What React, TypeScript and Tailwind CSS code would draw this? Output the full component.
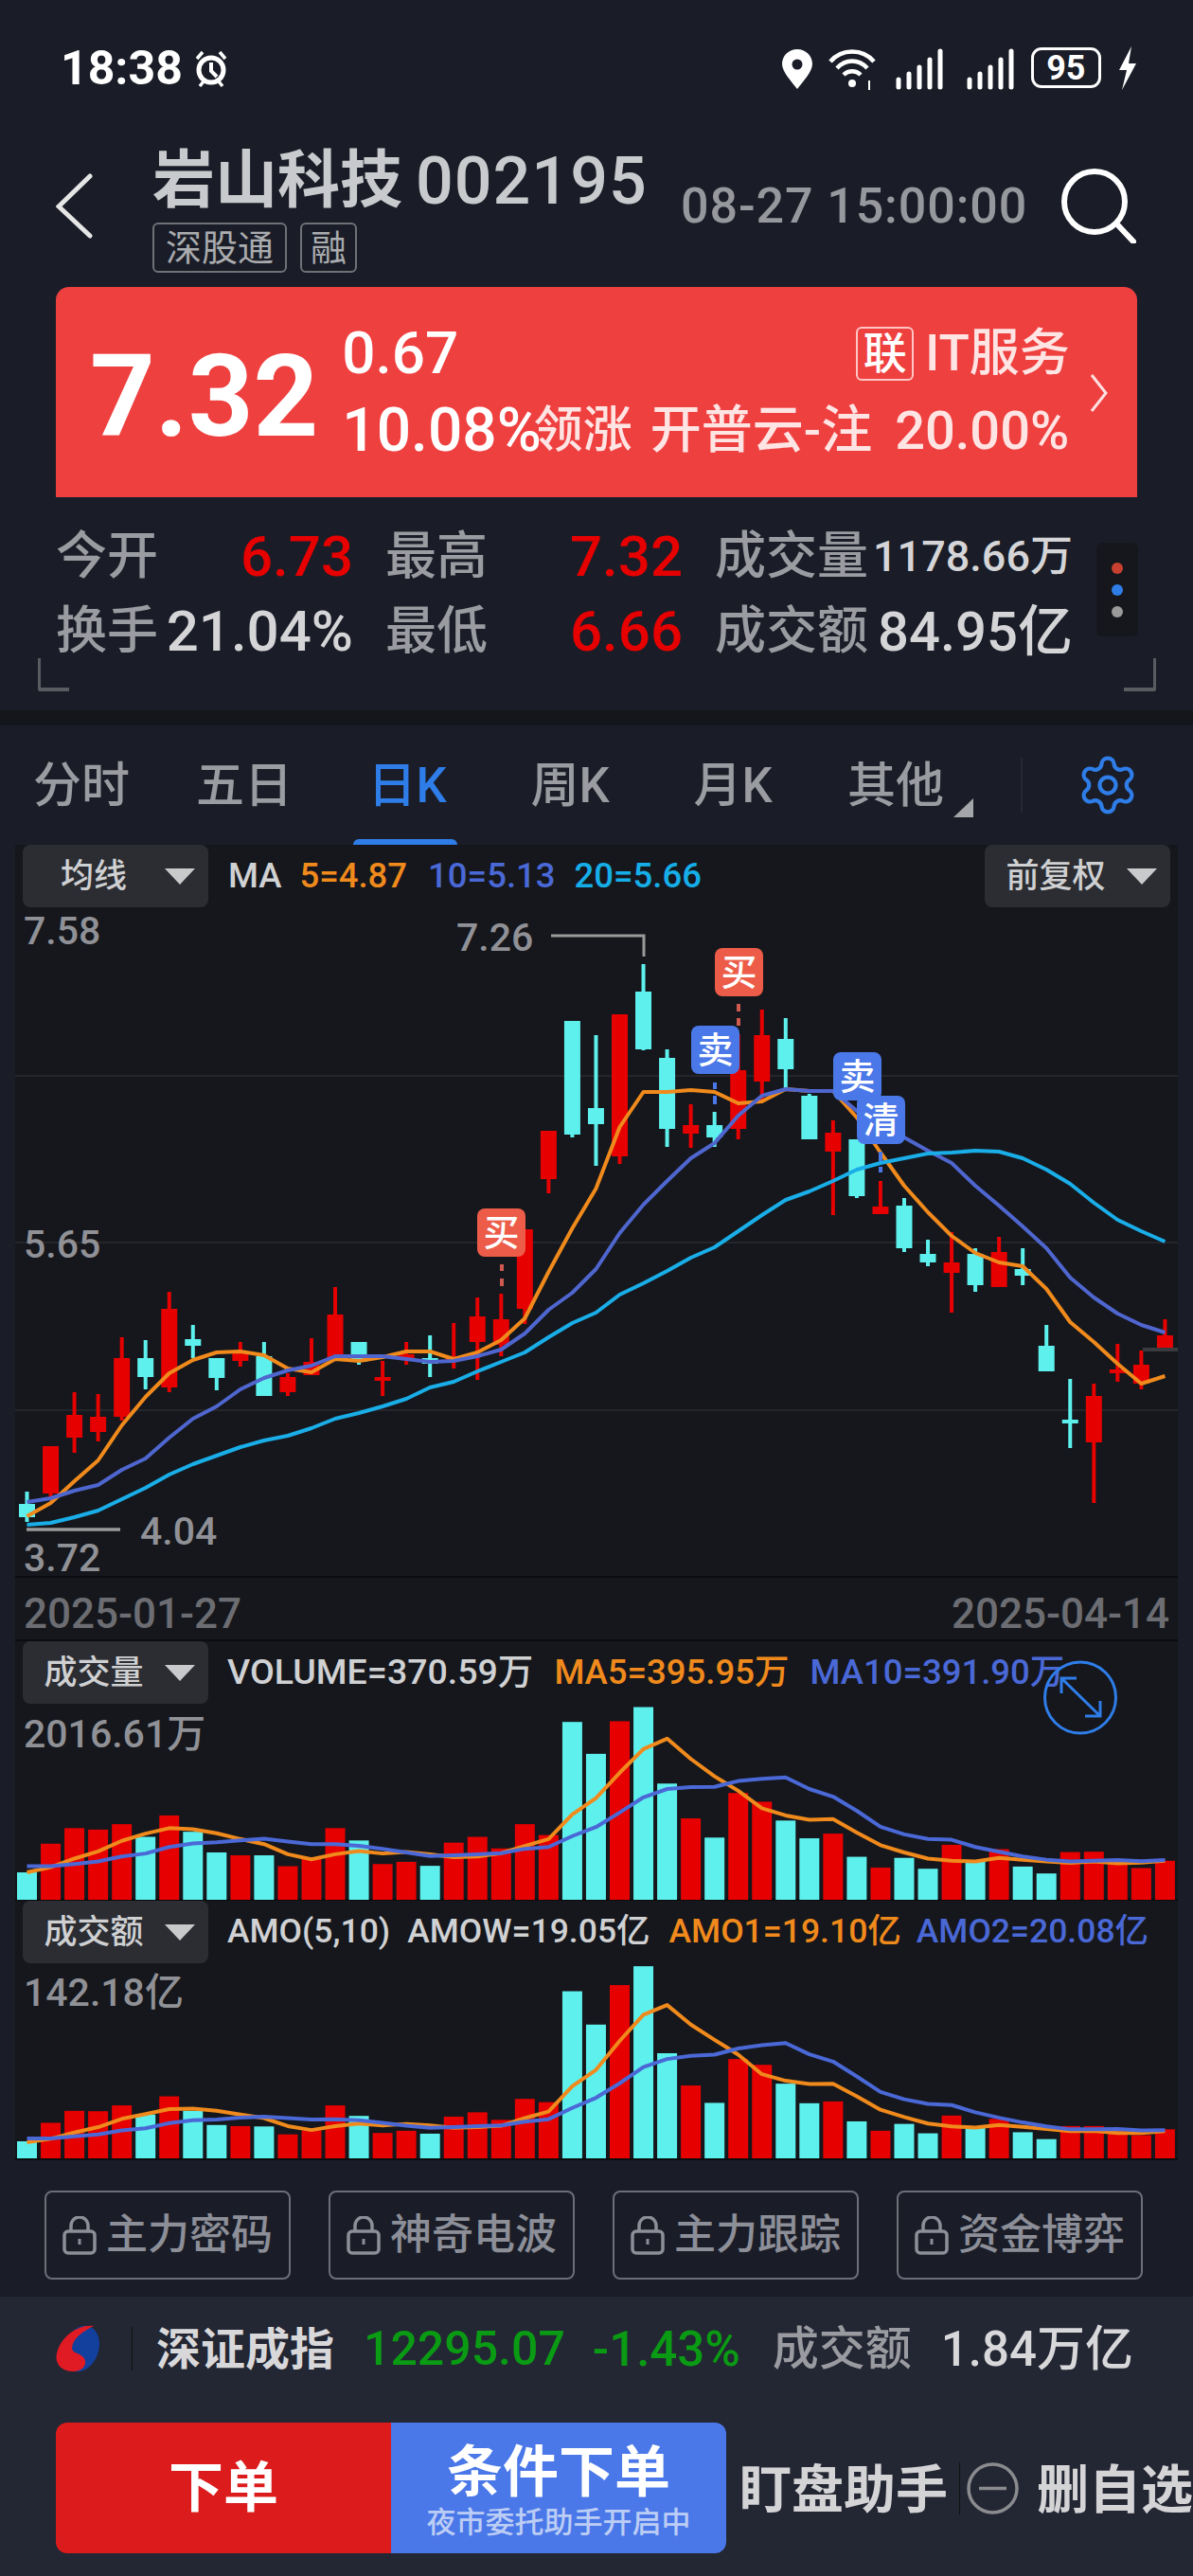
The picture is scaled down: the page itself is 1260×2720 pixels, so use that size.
import { Settings } from 'lucide-react';

// [wick top, body top, body bottom, wick bottom, colour], in page pixels
type Candle = [number, number, number, number, 'c' | 'r'];

const candles: Candle[] = [
  [1575, 1588, 1602, 1607, 'c'], [1527, 1527, 1577, 1582, 'r'], [1470, 1494, 1518, 1534, 'r'],
  [1472, 1496, 1512, 1522, 'r'], [1412, 1434, 1496, 1500, 'r'], [1415, 1434, 1454, 1467, 'c'],
  [1364, 1382, 1465, 1470, 'r'], [1399, 1414, 1421, 1434, 'c'], [1434, 1434, 1455, 1468, 'c'],
  [1417, 1427, 1437, 1443, 'r'], [1417, 1432, 1474, 1474, 'c'], [1450, 1454, 1470, 1474, 'r'],
  [1413, 1438, 1452, 1452, 'r'], [1359, 1388, 1433, 1433, 'r'], [1417, 1417, 1438, 1441, 'c'],
  [1437, 1454, 1458, 1474, 'r'], [1417, 1430, 1436, 1441, 'r'], [1410, 1434, 1440, 1454, 'c'],
  [1397, 1432, 1437, 1445, 'r'], [1370, 1390, 1417, 1457, 'r'], [1366, 1393, 1420, 1432, 'r'],
  [1298, 1298, 1382, 1398, 'r'], [1194, 1194, 1245, 1260, 'r'], [1078, 1078, 1198, 1201, 'c'],
  [1093, 1170, 1187, 1231, 'c'], [1071, 1071, 1221, 1229, 'r'], [1018, 1047, 1108, 1109, 'c'],
  [1108, 1117, 1192, 1211, 'c'], [1166, 1188, 1197, 1212, 'r'], [1174, 1188, 1201, 1211, 'c'],
  [1092, 1130, 1192, 1203, 'r'], [1066, 1093, 1142, 1163, 'r'], [1075, 1097, 1129, 1150, 'c'],
  [1155, 1157, 1203, 1203, 'c'], [1183, 1196, 1216, 1283, 'r'], [1203, 1203, 1263, 1265, 'c'],
  [1247, 1274, 1282, 1282, 'r'], [1265, 1273, 1318, 1322, 'c'], [1309, 1324, 1333, 1337, 'c'],
  [1301, 1333, 1344, 1386, 'r'], [1318, 1324, 1357, 1364, 'c'], [1306, 1322, 1359, 1359, 'r'],
  [1318, 1340, 1347, 1357, 'c'], [1399, 1421, 1448, 1448, 'c'], [1456, 1499, 1503, 1529, 'c'],
  [1461, 1474, 1523, 1587, 'r'], [1419, 1446, 1450, 1459, 'r'], [1426, 1441, 1461, 1467, 'r'],
  [1393, 1410, 1423, 1425, 'r'],
];

const ma5 = [1601, 1587, 1564, 1542, 1505, 1475, 1450, 1436, 1428, 1427, 1431, 1445, 1449, 1435, 1437, 1433, 1427, 1427, 1435, 1428, 1415, 1392, 1343, 1297, 1255, 1190, 1153, 1153, 1151, 1153, 1165, 1163, 1150, 1152, 1152, 1180, 1217, 1252, 1280, 1305, 1323, 1333, 1337, 1361, 1396, 1417, 1440, 1461, 1453];
const ma10 = [1586, 1582, 1574, 1568, 1552, 1540, 1518, 1498, 1485, 1467, 1455, 1447, 1442, 1432, 1432, 1432, 1435, 1438, 1437, 1432, 1425, 1408, 1383, 1365, 1340, 1302, 1272, 1247, 1223, 1207, 1178, 1157, 1150, 1152, 1152, 1173, 1190, 1201, 1215, 1228, 1252, 1273, 1295, 1318, 1349, 1370, 1387, 1399, 1407];
const ma20 = [1610, 1608, 1602, 1595, 1583, 1571, 1557, 1546, 1537, 1528, 1521, 1516, 1508, 1498, 1492, 1485, 1477, 1465, 1459, 1448, 1438, 1428, 1412, 1397, 1386, 1367, 1355, 1342, 1328, 1317, 1300, 1283, 1267, 1258, 1247, 1235, 1228, 1223, 1218, 1217, 1215, 1216, 1223, 1235, 1250, 1270, 1288, 1300, 1311];

const barColors = 'crrrrcrccrcrrrcrrcrrrrrccrccrcrrccrcrccrcrccrrrr'.split('');

const volTops = [750, 671, 628, 632, 617, 652, 593, 638, 695, 703, 703, 733, 712, 628, 662, 727, 721, 732, 668, 652, 684, 617, 647, 335, 423, 333, 294, 505, 601, 654, 531, 555, 607, 656, 643, 707, 737, 710, 740, 674, 720, 686, 734, 753, 694, 693, 718, 738, 718];
const volMa5 = [750, 736, 712, 692, 663, 643, 628, 631, 642, 658, 672, 700, 714, 700, 691, 698, 694, 700, 708, 706, 697, 677, 658, 590, 545, 475, 410, 381, 437, 485, 525, 573, 593, 605, 603, 640, 675, 695, 712, 718, 720, 710, 715, 720, 724, 720, 725, 723, 718];
const volMa10 = [733, 733, 727, 720, 706, 698, 680, 670, 667, 662, 657, 665, 672, 672, 677, 685, 695, 705, 703, 700, 697, 685, 680, 650, 625, 585, 543, 520, 515, 514, 498, 492, 488, 520, 541, 580, 624, 645, 658, 660, 680, 693, 706, 715, 720, 718, 716, 719, 716];

const amoTops = [1492, 1441, 1408, 1409, 1393, 1418, 1368, 1408, 1447, 1450, 1451, 1473, 1462, 1393, 1422, 1469, 1463, 1471, 1424, 1412, 1433, 1375, 1384, 1078, 1170, 1061, 1009, 1249, 1338, 1386, 1265, 1281, 1333, 1387, 1382, 1437, 1463, 1444, 1470, 1421, 1455, 1430, 1467, 1486, 1450, 1450, 1463, 1475, 1459];
const amoMa5 = [1495, 1485, 1468, 1453, 1430, 1417, 1403, 1402, 1408, 1418, 1428, 1450, 1461, 1450, 1443, 1448, 1444, 1448, 1455, 1453, 1449, 1428, 1410, 1340, 1295, 1215, 1143, 1116, 1170, 1212, 1253, 1307, 1325, 1334, 1333, 1368, 1405, 1425, 1443, 1451, 1454, 1447, 1452, 1458, 1464, 1463, 1469, 1469, 1464];
const amoMa10 = [1484, 1484, 1478, 1473, 1462, 1456, 1442, 1434, 1432, 1427, 1424, 1428, 1432, 1431, 1434, 1441, 1449, 1455, 1453, 1450, 1448, 1438, 1431, 1400, 1372, 1332, 1287, 1265, 1256, 1253, 1236, 1227, 1221, 1252, 1272, 1313, 1356, 1376, 1389, 1392, 1412, 1427, 1440, 1451, 1459, 1459, 1458, 1462, 1461];

const CYAN = '#5ef0ed';
const RED = '#e60000';
const ORANGE = '#f08a1c';
const BLUE = '#4f66cf';
const SKY = '#1aaee8';

const cx = (i: number) => 28.5 + 25.04 * i;
const toPage = (v: number) => 1690 + v / 2.613;
const points = (ys: number[]) => ys.map((y, i) => `${cx(i)},${y}`).join(' ');

function Line({ ys, color }: { ys: number[]; color: string }) {
  return <polyline points={points(ys)} fill="none" stroke={color} strokeWidth={4} strokeLinejoin="round" />;
}

function Triangle() {
  return (
    <svg width="32" height="17" viewBox="0 0 32 17">
      <polygon points="0,0 32,0 16,17" fill="#c9cacc" />
    </svg>
  );
}

function Pill({ label }: { label: string }) {
  return (
    <div className="flex h-[66px] w-[196px] shrink-0 items-center rounded-lg bg-[#2b2d33]">
      <span className="w-[150px] text-center text-[35px] font-medium leading-none text-[#cfd0d2]">{label}</span>
      <Triangle />
    </div>
  );
}

function Marker({ text, className }: { text: string; className: string }) {
  return (
    <div className={`absolute flex h-[51px] w-[51px] items-center justify-center rounded-lg text-[38px] font-medium leading-none text-white ${className}`}>
      {text}
    </div>
  );
}

function AxisLabel({ text, className }: { text: string; className: string }) {
  return <div className={`absolute text-[41px] font-medium leading-[40px] text-[#909196] ${className}`}>{text}</div>;
}

function Bars({ tops, base }: { tops: number[]; base: number }) {
  return (
    <>
      {tops.map((v, i) => {
        const y = toPage(v);
        return (
          <rect key={i} x={cx(i) - 10.5} y={y} width={21} height={base - y} fill={barColors[i] === 'c' ? CYAN : RED} />
        );
      })}
    </>
  );
}

function MainChart() {
  return (
    <svg className="absolute inset-0" width="1228" height="774" viewBox="16 892 1228 774">
      {[1136, 1312, 1489].map((y) => (
        <line key={y} x1="16" x2="1244" y1={y} y2={y} stroke="#24262c" strokeWidth="2" />
      ))}
      {candles.map(([top, bodyTop, bodyBottom, bottom, color], i) => {
        const fill = color === 'c' ? CYAN : RED;
        return (
          <g key={i} fill={fill}>
            <rect x={cx(i) - 2} y={top} width={4} height={bottom - top} />
            <rect x={cx(i) - 8.5} y={bodyTop} width={17} height={bodyBottom - bodyTop} />
          </g>
        );
      })}
      <Line ys={ma5} color={ORANGE} />
      <Line ys={ma10} color={BLUE} />
      <Line ys={ma20} color={SKY} />
      <path d="M582 988H680V1010" fill="none" stroke="#9a9a9a" strokeWidth="3" />
      <path d="M28 1615H127" fill="none" stroke="#9a9a9a" strokeWidth="3.5" />
      <path d="M1207 1425H1244" stroke="#3a3b3e" strokeWidth="4" />
      <g stroke="#cf5a4f" strokeWidth="4">
        <path d="M530 1335V1342M530 1350V1358" />
        <path d="M780 1060V1068M780 1075V1083" />
      </g>
      <g stroke="#4a78e8" strokeWidth="4">
        <path d="M755 1143V1150M755 1157V1166" />
        <path d="M930 1216V1226M930 1232V1238" />
      </g>
    </svg>
  );
}

function StatusBar() {
  return (
    <div className="flex h-[140px] items-start pl-[64px] pt-[47px]">
      <span className="text-[50px] font-bold leading-[50px] text-white">18:38</span>
      <svg className="ml-[12px] mt-[6px]" width="36" height="40" viewBox="0 0 36 40" fill="none" stroke="#fff">
        <circle cx="18" cy="21" r="13" strokeWidth="5" />
        <path d="M18 13V22L24 28" strokeWidth="4" />
        <path d="M3 9L9 2M33 9L27 2M6 38L10 33M30 38L26 33" strokeWidth="3.5" />
      </svg>
      <svg className="ml-[585px] mt-[5px]" width="32" height="42" viewBox="0 0 32 42">
        <path fillRule="evenodd" fill="#fff" d="M16 0C7 0 0 7 0 15.500C0 24 10 34 16 42C22 34 32 24 32 15.500C32 7 25 0 16 0ZM16 10.500A5.500 5.500 0 1 1 16 21.500A5.500 5.500 0 0 1 16 10.500Z" />
      </svg>
      <svg className="ml-[16px] mt-[4px]" width="52" height="44" viewBox="0 0 52 44" fill="none" stroke="#fff" strokeWidth="4.500">
        <path d="M3 14C15 0 37 0 49 14" />
        <path d="M10 21C19 11 33 11 42 21" />
        <path d="M17 28C22 23 30 23 35 28" />
        <circle cx="26" cy="37" r="4" fill="#fff" stroke="none" />
        <path d="M44 44V34" strokeWidth="2" />
      </svg>
      {[0, 1].map((n) => (
        <svg key={n} className={n === 0 ? 'ml-[20px] mt-[4px]' : 'ml-[23px] mt-[4px]'} width="52" height="44" viewBox="0 0 52 44" stroke="#fff" strokeWidth="5" strokeLinecap="round">
          <path d="M3 33V41M14 27V41M25 20V41M36 12V41M47 3V41" />
        </svg>
      ))}
      <div className="ml-[16px] mt-[3px] flex h-[43px] w-[74px] items-center justify-center rounded-[11px] border-[3px] border-white text-[36px] font-bold leading-none text-white">
        95
      </div>
      <svg className="ml-[18px] mt-[2px]" width="20" height="46" viewBox="0 0 20 46">
        <path fill="#fff" d="M14 0L1 25H9L4 46L19 18H11L14 0Z" />
      </svg>
    </div>
  );
}

function Header() {
  return (
    <div className="flex h-[163px] items-start">
      <svg className="ml-[59px] mt-[43px]" width="39" height="69" viewBox="0 0 39 69" fill="none" stroke="#e6e6e6" strokeWidth="5" strokeLinecap="round">
        <path d="M36 3L3 35L36 66" />
      </svg>
      <div className="ml-[63px] w-[558px] pt-[16px]">
        <div className="flex h-[70px] items-center">
          <span className="text-[66px] font-bold leading-none text-[#c9cacd]">岩山科技</span>
          <span className="ml-[14px] text-[70px] font-medium leading-none tracking-[1px] text-[#c9cacd]">002195</span>
        </div>
        <div className="mt-[9px] flex gap-[14px]">
          <span className="flex h-[53px] w-[142px] items-center justify-center rounded-md border-2 border-[#6f7177] text-[38px] leading-none text-[#a9abae]">深股通</span>
          <span className="flex h-[53px] w-[60px] items-center justify-center rounded-md border-2 border-[#6f7177] text-[38px] leading-none text-[#a9abae]">融</span>
        </div>
      </div>
      <span className="mt-[52px] text-[52px] font-medium leading-[52px] tracking-[0.9px] text-[#97989d]">08-27 15:00:00</span>
      <svg className="ml-[35px] mt-[37px]" width="80" height="80" viewBox="0 0 80 80" fill="none" stroke="#fff" strokeWidth="6" strokeLinecap="round">
        <circle cx="36" cy="36" r="32" />
        <path d="M60 60L77 78" />
      </svg>
    </div>
  );
}

function PriceCard() {
  return (
    <div className="mx-[59px] flex h-[222px] items-start rounded-t-[14px] bg-[#ef4040] text-white">
      <span className="ml-[36px] mt-[56px] text-[120px] font-bold leading-[120px]">7.32</span>
      <div className="ml-[25px] w-[792px] pt-[34px]">
        <div className="flex h-[72px] items-center">
          <span className="text-[62px] font-medium leading-none">0.67</span>
          <span className="ml-[420px] flex h-[57px] w-[61px] items-center justify-center rounded-md border-2 border-[#ffc4c4] text-[46px] font-medium leading-none">联</span>
          <span className="ml-[12px] text-[53px] font-medium leading-none text-[#ffe4e4]">IT服务</span>
        </div>
        <div className="mt-[15px] flex h-[62px] items-center">
          <span className="text-[64px] font-medium leading-none">10.08%</span>
          <span className="ml-[-8px] text-[52px] font-medium leading-none text-[#ffe4e4]">领涨</span>
          <span className="ml-[19px] text-[54px] font-medium leading-none text-[#ffe4e4]">开普云-注</span>
          <span className="ml-[24px] text-[56px] font-medium leading-none text-[#ffe4e4]">20.00%</span>
        </div>
      </div>
      <svg className="ml-[-2px] mt-[92px]" width="20" height="40" viewBox="0 0 20 40" fill="none" stroke="#ffe0e0" strokeWidth="3">
        <path d="M2 1L17 20L2 39" />
      </svg>
    </div>
  );
}

function Stat({ label, value, valueClass }: { label: string; value: string; valueClass: string }) {
  return (
    <div className="flex h-[79px] items-center justify-between">
      <span className="text-[54px] font-medium leading-none text-[#9b9ca1]">{label}</span>
      <span className={`font-medium leading-none ${valueClass}`}>{value}</span>
    </div>
  );
}

function Stats() {
  const red = 'text-[60px] text-[#e60000]';
  const light = 'text-[#d5d5d8]';
  return (
    <div className="relative h-[225px]">
      <div className="flex pl-[59px] pt-[23px]">
        <div className="grid grid-cols-[314px_314px_378px] gap-x-[34px]">
          <Stat label="今开" value="6.73" valueClass={red} />
          <Stat label="最高" value="7.32" valueClass={red} />
          <Stat label="成交量" value="1178.66万" valueClass={`text-[45px] ${light}`} />
          <Stat label="换手" value="21.04%" valueClass={`text-[60px] ${light}`} />
          <Stat label="最低" value="6.66" valueClass={red} />
          <Stat label="成交额" value="84.95亿" valueClass={`text-[58px] ${light}`} />
        </div>
        <div className="ml-[25px] mt-[25px] flex h-[99px] w-[44px] flex-col items-center justify-center gap-[11px] rounded-md bg-[#15171c]">
          <span className="h-[12px] w-[12px] rounded-full bg-[#c8402f]" />
          <span className="h-[12px] w-[12px] rounded-full bg-[#2f7de6]" />
          <span className="h-[12px] w-[12px] rounded-full bg-[#9a9a9a]" />
        </div>
      </div>
      <span className="absolute left-[40px] top-[170px] h-[35px] w-[33px] rounded-bl-[3px] border-b-[4px] border-l-[3px] border-[#5a5c61]" />
      <span className="absolute left-[1187px] top-[170px] h-[35px] w-[34px] rounded-br-[3px] border-b-[4px] border-r-[3px] border-[#5a5c61]" />
    </div>
  );
}

function Tabs() {
  const tabs = ['分时', '五日', '日K', '周K', '月K', '其他'];
  return (
    <div className="relative grid h-[126px] grid-cols-[repeat(6,172px)]">
      {tabs.map((t) => (
        <div key={t} className={`relative flex items-center justify-center text-[51px] font-medium leading-none ${t === '日K' ? 'font-bold text-[#2f7de8]' : 'text-[#9b9ca1]'}`}>
          {t}
          {t === '日K' && <span className="absolute bottom-0 left-[29px] h-[6px] w-[110px] rounded-t-md bg-[#2f7de8]" />}
          {t === '其他' && (
            <svg className="absolute left-[60px] top-[0px] ml-[87px] mt-[77px]" width="21" height="20" viewBox="0 0 21 20">
              <polygon points="21,0 21,20 0,20" fill="#a5a6aa" />
            </svg>
          )}
        </div>
      ))}
      <span className="absolute left-[1078px] top-[34px] h-[58px] w-[2px] bg-[#262932]" />
      <Settings className="absolute left-[1136px] top-[29px] text-[#2f7de8]" size={68} strokeWidth={1.5} />
    </div>
  );
}

function ChartPanels() {
  return (
    <div className="mx-[16px] flex h-[1389px] flex-col bg-[#15171c] text-[36.5px] font-medium leading-none">
      <div className="relative h-[774px] shrink-0 border-b-2 border-[#0b0c0f]">
        <MainChart />
        <div className="relative flex items-center pl-[8px] pr-[8px]">
          <Pill label="均线" />
          <span className="ml-[21px] text-[#d0d1d3]">MA</span>
          <span className="ml-[19px] text-[#f08a1c]">5=4.87</span>
          <span className="ml-[22px] text-[#4a68d6]">10=5.13</span>
          <span className="ml-[20px] text-[#16aee8]">20=5.66</span>
          <div className="ml-auto">
            <Pill label="前复权" />
          </div>
        </div>
        <AxisLabel text="7.58" className="left-[9px] top-[71px]" />
        <AxisLabel text="5.65" className="left-[9px] top-[402px]" />
        <AxisLabel text="3.72" className="left-[9px] top-[733px]" />
        <AxisLabel text="7.26" className="left-[466px] top-[78px]" />
        <AxisLabel text="4.04" className="left-[132px] top-[705px]" />
        <Marker text="买" className="left-[488px] top-[384px] bg-[#ec5c48]" />
        <Marker text="买" className="left-[739px] top-[109px] bg-[#ec5c48]" />
        <Marker text="卖" className="left-[714px] top-[191px] bg-[#4a78e8]" />
        <Marker text="卖" className="left-[864px] top-[219px] bg-[#4a78e8]" />
        <Marker text="清" className="left-[889px] top-[265px] bg-[#4a78e8]" />
      </div>

      <div className="flex h-[67px] shrink-0 justify-between border-b-2 border-[#0b0c0f] px-[9px] pt-[18px] text-[44px] font-medium leading-[40px] text-[#6c6d72]">
        <span>2025-01-27</span>
        <span>2025-04-14</span>
      </div>

      <div className="relative h-[274px] shrink-0 border-b-2 border-[#0b0c0f]">
        <svg className="absolute inset-0" width="1228" height="274" viewBox="16 1733 1228 274">
          <Bars tops={volTops} base={2006} />
          <Line ys={volMa5.map(toPage)} color={ORANGE} />
          <Line ys={volMa10.map(toPage)} color="#4a68d6" />
        </svg>
        <div className="relative flex items-center pl-[8px]">
          <Pill label="成交量" />
          <span className="ml-[20px] text-[37.5px] text-[#d0d1d3]">VOLUME=370.59万</span>
          <span className="ml-[22px] text-[#f08a1c]">MA5=395.95万</span>
          <span className="ml-[22px] text-[#4a68d6]">MA10=391.90万</span>
        </div>
        <AxisLabel text="2016.61万" className="left-[9px] top-[78px]" />
        <svg className="absolute left-[1086px] top-[20px]" width="78" height="79" viewBox="0 0 78 79" fill="none" stroke="#2f7de8" strokeWidth="3">
          <circle cx="39" cy="39.500" r="37.500" />
          <path d="M19 19L60 59M19 35V19H35M60 43V59H44" />
        </svg>
      </div>

      <div className="relative h-[274px] shrink-0 border-b-2 border-[#0b0c0f]">
        <svg className="absolute inset-0" width="1228" height="274" viewBox="16 2007 1228 274">
          <Bars tops={amoTops} base={2279} />
          <Line ys={amoMa5.map(toPage)} color={ORANGE} />
          <Line ys={amoMa10.map(toPage)} color="#4a68d6" />
        </svg>
        <div className="relative flex items-center pl-[8px] text-[35.5px]">
          <Pill label="成交额" />
          <span className="ml-[20px] text-[#d0d1d3]">AMO(5,10)</span>
          <span className="ml-[18px] text-[#d0d1d3]">AMOW=19.05亿</span>
          <span className="ml-[20px] text-[#f08a1c]">AMO1=19.10亿</span>
          <span className="ml-[16px] text-[#4a68d6]">AMO2=20.08亿</span>
        </div>
        <AxisLabel text="142.18亿" className="left-[9px] top-[77px]" />
      </div>
    </div>
  );
}

function LockButton({ label }: { label: string }) {
  return (
    <div className="flex h-[94px] w-[260px] items-center rounded-lg border-2 border-[#6c6e78] pl-[17px]">
      <svg width="36" height="41" viewBox="0 0 36 41" fill="none" stroke="#8c8e98" strokeWidth="3.500">
        <rect x="2" y="16" width="32" height="23" rx="4" />
        <path d="M9 16V10A9 9 0 0 1 27 10V16" />
        <path d="M18 24V30" strokeWidth="3" />
      </svg>
      <span className="ml-[10px] text-[44px] font-medium leading-none text-[#8c8e98]">{label}</span>
    </div>
  );
}

function IndexRow() {
  return (
    <div className="flex h-[110px] items-center pl-[59px]">
      <svg width="54" height="50" viewBox="0 0 54 50">
        <ellipse cx="27" cy="25" rx="18" ry="25" transform="rotate(20 27 25)" fill="#12409c" />
        <path fill="#e01b24" d="M40 1C24 -1 5 12 1 30C-2 42 8 50 20 49C30 48 34 40 29 34C25 29 17 30 17 24C18 14 28 7 40 1Z" />
      </svg>
      <span className="ml-[26px] h-[46px] w-[1px] bg-[#101116]" />
      <span className="ml-[25px] text-[47px] font-bold leading-none text-[#d8d8da]">深证成指</span>
      <span className="ml-[31px] text-[50px] font-medium leading-none text-[#0a9a14]">12295.07</span>
      <span className="ml-[29px] text-[51px] font-medium leading-none text-[#0a9a14]">-1.43%</span>
      <span className="ml-[34px] text-[49px] font-medium leading-none text-[#9a9ba0]">成交额</span>
      <span className="ml-[31px] text-[51px] font-medium leading-none text-[#d8d8da]">1.84万亿</span>
    </div>
  );
}

function OrderRow() {
  return (
    <div className="mt-[23px] flex h-[138px] items-center pl-[59px]">
      <div className="flex h-full w-[354px] items-center justify-center rounded-l-xl bg-[#dc1c1c] text-[58px] font-bold leading-none text-white">
        下单
      </div>
      <div className="flex h-full w-[354px] flex-col items-center justify-center rounded-r-xl bg-[#4a78e8] pt-[6px]">
        <span className="text-[59px] font-bold leading-none text-white">条件下单</span>
        <span className="mt-[8px] text-[31px] font-medium leading-none text-[#bccdf5]">夜市委托助手开启中</span>
      </div>
      <span className="ml-[14px] mt-[4px] shrink-0 text-[55px] font-bold leading-none text-[#d4d4d6]">盯盘助手</span>
      <span className="ml-[12px] h-[55px] w-[1px] shrink-0 bg-[#101116]" />
      <svg className="ml-[7px] shrink-0" width="55" height="55" viewBox="0 0 55 55" fill="none" stroke="#8a8b8f" strokeWidth="3.500">
        <circle cx="27.500" cy="27.500" r="25.500" />
        <path d="M13 27.500H42" />
      </svg>
      <span className="ml-[19px] mt-[4px] shrink-0 whitespace-nowrap text-[55px] font-bold leading-none text-[#d4d4d6]">删自选</span>
    </div>
  );
}

export default function App() {
  return (
    <div className="flex h-[2720px] w-[1260px] flex-col overflow-hidden bg-[#1a1d27] font-[Roboto,'Noto_Sans_CJK_SC',sans-serif]">
      <StatusBar />
      <Header />
      <PriceCard />
      <Stats />
      <div className="h-[16px] shrink-0 bg-[#14161b]" />
      <Tabs />
      <ChartPanels />
      <div className="flex h-[144px] shrink-0 gap-[40px] pl-[47px] pt-[32px]">
        {['主力密码', '神奇电波', '主力跟踪', '资金博弈'].map((l) => (
          <LockButton key={l} label={l} />
        ))}
      </div>
      <div className="flex-1 bg-[#232633]">
        <IndexRow />
        <OrderRow />
      </div>
    </div>
  );
}
